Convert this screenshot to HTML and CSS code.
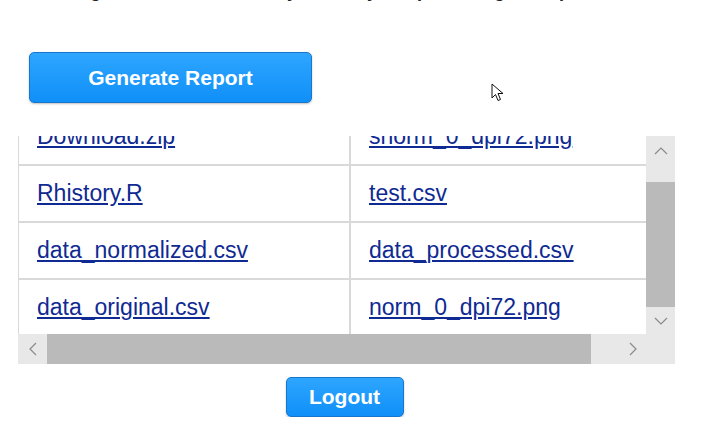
FILE: index.html
```html
<!DOCTYPE html>
<html lang="en">
<head>
  <meta charset="UTF-8">
  <meta name="viewport" content="width=device-width, initial-scale=1.0">
  <title>Report Files</title>
  <link rel="stylesheet" href="styles.css">
</head>
<body>
  <div class="page">
    <p class="intro">Use the generate button to run your analyses, producing the report files below.</p>

    <div class="actions">
      <button class="btn btn-generate">Generate Report</button>
    </div>

    <div class="files">
      <div class="files-view">
        <table class="file-table">
          <tr><td><a href="#">Download.zip</a></td><td><a href="#">snorm_0_dpi72.png</a></td></tr>
          <tr><td><a href="#">Rhistory.R</a></td><td><a href="#">test.csv</a></td></tr>
          <tr><td><a href="#">data_normalized.csv</a></td><td><a href="#">data_processed.csv</a></td></tr>
          <tr><td><a href="#">data_original.csv</a></td><td><a href="#">norm_0_dpi72.png</a></td></tr>
        </table>
      </div>

      <!-- vertical scrollbar -->
      <div class="vbar">
        <div class="sb-btn sb-up">
          <svg width="14" height="8" viewBox="0 0 14 8"><path d="M1 7 L7 1 L13 7" fill="none" stroke="#8a8a8a" stroke-width="1.2"/></svg>
        </div>
        <div class="vbar-thumb"></div>
        <div class="sb-btn sb-down">
          <svg width="14" height="8" viewBox="0 0 14 8"><path d="M1 1 L7 7 L13 1" fill="none" stroke="#8a8a8a" stroke-width="1.2"/></svg>
        </div>
      </div>

      <!-- horizontal scrollbar -->
      <div class="hbar">
        <div class="sb-btn sb-left">
          <svg width="8" height="14" viewBox="0 0 8 14"><path d="M7 1 L1 7 L7 13" fill="none" stroke="#8a8a8a" stroke-width="1.2"/></svg>
        </div>
        <div class="hbar-thumb"></div>
        <div class="sb-btn sb-right">
          <svg width="8" height="14" viewBox="0 0 8 14"><path d="M1 1 L7 7 L1 13" fill="none" stroke="#8a8a8a" stroke-width="1.2"/></svg>
        </div>
      </div>
      <div class="corner"></div>
    </div>

    <div class="logout-row">
      <button class="btn btn-logout">Logout</button>
    </div>
  </div>

  <svg class="cursor" width="14" height="20" viewBox="0 0 14 20">
    <path d="M1 1 L1 15 L4.5 11.5 L7 17.5 L9.5 16.5 L7 10.5 L12 10.5 Z" fill="#fff" stroke="#111" stroke-width="1"/>
  </svg>
</body>
</html>
```

FILE: styles.css
```css
:root {
  --btn-top: #2ea6ff;
  --btn-bottom: #0f8ff8;
  --btn-border: #1677cc;
  --link-color: #0f2a92;
  --grid-line: #d9d9d9;
  --sb-track: #e8e8e8;
  --sb-thumb: #bababa;
}

body {
  margin: 0;
  background: #fff;
  font-family: "Liberation Sans", Arial, sans-serif;
  overflow: hidden;
}

.page {
  width: 657px;
  margin-left: 18px;
}

.intro {
  margin: -21px 0 0 2px;
  font-size: 18px;
  line-height: 24px;
  font-weight: bold;
  color: #222;
  white-space: nowrap;
}

.actions {
  margin-top: 49px;
  padding-left: 11px;
}

.btn {
  display: block;
  font-family: "Liberation Sans", Arial, sans-serif;
  font-size: 21px;
  font-weight: bold;
  color: #fff;
  background: linear-gradient(var(--btn-top), var(--btn-bottom));
  border: 1px solid var(--btn-border);
  border-radius: 5px;
  box-shadow: 0 1px 2px rgba(0, 0, 0, 0.25);
  cursor: pointer;
  padding: 0;
}

.btn-generate {
  width: 283px;
  height: 51px;
}

.files {
  margin-top: 33px;
  display: grid;
  grid-template-columns: 628px 29px;
  grid-template-rows: 198px 30px;
}

.files-view {
  overflow: hidden;
}

.file-table {
  margin-top: -29px;
  width: 720px;
  border-collapse: collapse;
}

.file-table td {
  height: 55px;
  padding: 0 0 0 18px;
  border: 2px solid var(--grid-line);
  border-left-width: 1px;
  vertical-align: middle;
  font-size: 23px;
  white-space: nowrap;
}

.file-table td:first-child {
  width: 312px;
}

.file-table a {
  color: var(--link-color);
}

.vbar {
  display: flex;
  flex-direction: column;
  background: var(--sb-track);
}

.vbar-thumb {
  height: 125px;
  background: var(--sb-thumb);
}

.hbar {
  display: flex;
  background: var(--sb-track);
}

.hbar-thumb {
  width: 544px;
  background: var(--sb-thumb);
}

.sb-btn {
  display: flex;
  align-items: center;
  justify-content: center;
}

.sb-up {
  height: 30px;
  margin-bottom: 16px;
}

.sb-down {
  flex: 1;
}

.sb-left {
  width: 29px;
}

.sb-right {
  flex: 1;
  padding-left: 28px;
}

.corner {
  background: var(--sb-track);
}

.logout-row {
  margin-top: 13px;
  padding-right: 4px;
  display: flex;
  justify-content: center;
}

.btn-logout {
  width: 118px;
  height: 40px;
}

.cursor {
  position: absolute;
  left: 491px;
  top: 83px;
}
```
